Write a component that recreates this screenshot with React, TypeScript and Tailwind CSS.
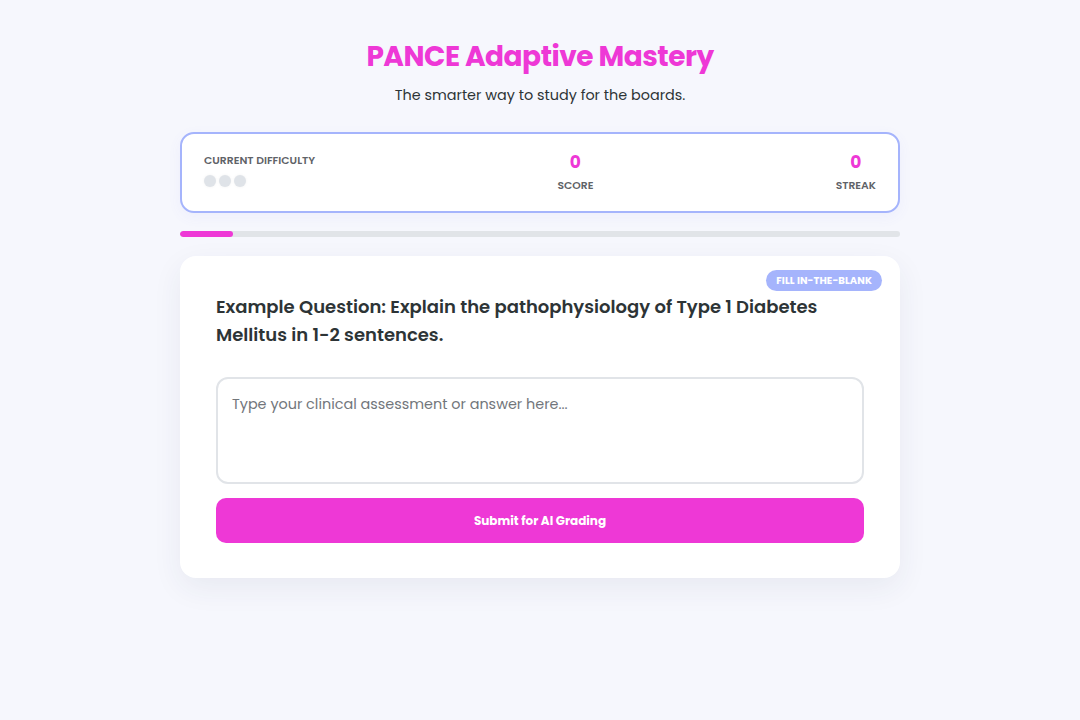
import React from "react";

const PINK = "text-[#ee38d6]";

export default function App() {
  return (
    <div
      className="min-h-screen bg-[#f6f7fd] text-[#2d3436]"
      style={{ fontFamily: "Poppins, Inter, 'Noto Sans', sans-serif" }}
    >
      <div className="mx-auto w-[720px] pt-[38px]">
        <header className="text-center">
          <h1 className={`text-[28px] font-bold leading-[38px] tracking-[-0.5px] ${PINK}`}>
            PANCE Adaptive Mastery
          </h1>
          <p className="mt-[8px] text-[14.4px] leading-[22px] text-[#2d3436]">
            The smarter way to study for the boards.
          </p>
        </header>

        <div className="mt-[26px] flex items-start justify-between rounded-[14px] border-2 border-[#a5b4fc] bg-white px-[22px] pb-[17px] pt-[19px] shadow-[0_4px_14px_rgba(99,102,241,0.06)]">
          <div>
            <p className="text-[10.8px] font-semibold uppercase leading-[16px] text-[#5f6368]">
              Current Difficulty
            </p>
            <div className="mt-[6px] flex gap-[3px]">
              {[0, 1, 2].map((i) => (
                <span
                  key={i}
                  className="h-[12px] w-[12px] rounded-full bg-[#dfe3e8] shadow-[0_0_3px_rgba(0,0,0,0.06)]"
                />
              ))}
            </div>
          </div>
          <div className="flex flex-col items-center">
            <p className={`-mt-[1px] text-[17px] font-bold leading-[20px] ${PINK}`}>0</p>
            <p className="mt-[6px] text-[10.8px] font-semibold uppercase leading-[16px] text-[#5f6368]">
              Score
            </p>
          </div>
          <div className="flex flex-col items-center">
            <p className={`-mt-[1px] text-[17px] font-bold leading-[20px] ${PINK}`}>0</p>
            <p className="mt-[6px] text-[10.8px] font-semibold uppercase leading-[16px] text-[#5f6368]">
              Streak
            </p>
          </div>
        </div>

        <div className="mt-[18px] h-[6px] w-full overflow-hidden rounded-full bg-[#e1e4e8]">
          <div className="h-full w-[7.4%] rounded-full bg-[#ee38d6]" />
        </div>

        <div className="relative mt-[19px] rounded-[16px] bg-white px-[36px] pb-[35px] pt-[37px] shadow-[0_10px_30px_rgba(40,50,90,0.07)]">
          <span className="absolute right-[18px] top-[14px] rounded-full bg-[#a5b4fc] px-[10px] py-[4px] text-[10px] font-bold uppercase leading-[13px] tracking-[0.1px] text-white">
            Fill In-the-Blank
          </span>
          <h2 className="text-[18px] font-semibold leading-[28px] text-[#2d3436]">
            Example Question: Explain the pathophysiology of Type 1 Diabetes Mellitus in 1-2 sentences.
          </h2>
          <textarea
            className="mt-[28px] block h-[107px] w-full resize-none rounded-[12px] border-2 border-[#e1e4e8] px-[14px] py-[14px] text-[14.4px] leading-[22px] outline-none placeholder:text-[#72767b]"
            placeholder="Type your clinical assessment or answer here..."
          />
          <button
            type="button"
            className="mt-[14px] block h-[45px] w-full rounded-[10px] bg-[#ee38d6] text-[12px] font-bold text-white"
          >
            Submit for AI Grading
          </button>
        </div>
      </div>
    </div>
  );
}
